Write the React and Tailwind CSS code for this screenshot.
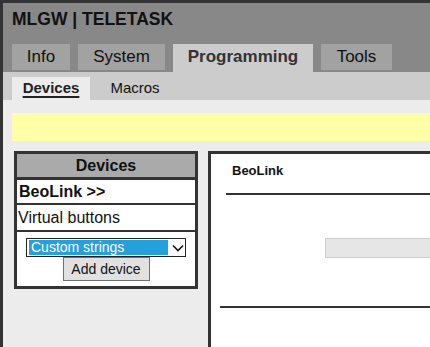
export default function App() {
  const tabs = [
    { label: 'Info', w: 'w-[58px]' },
    { label: 'System', w: 'w-[87px]' },
    { label: 'Programming', w: 'w-[140px]', active: true },
    { label: 'Tools', w: 'w-[71px]' },
  ]

  return (
    <div className="h-[347px] w-[430px] overflow-hidden bg-[#333] pl-[3px] pt-[3px] font-['Liberation_Sans',Arial,sans-serif]">
      <div className="h-full bg-[#ececec]">
        {/* header */}
        <header className="bg-[#888] pt-[5px]">
          <h1 className="pl-[9px] text-[17.5px] font-bold leading-[22px] text-[#111]">MLGW | TELETASK</h1>
          <nav className="mt-[14px] flex items-start gap-[8px] pl-[9px] h-[28px]">
            {tabs.map((t) =>
              t.active ? (
                <div
                  key={t.label}
                  className={`${t.w} h-[28px] bg-[#ccc] text-center text-[17px] font-bold leading-[26px] text-[#333]`}
                >
                  {t.label}
                </div>
              ) : (
                <div
                  key={t.label}
                  className={`${t.w} h-[26px] bg-[#a2a2a2] text-center text-[17px] leading-[26px] text-[#111]`}
                >
                  {t.label}
                </div>
              )
            )}
          </nav>
        </header>

        {/* sub navigation */}
        <div className="flex h-[28px] items-end bg-[#ccc] pl-[9px]">
          <div className="h-[23px] w-[78px] bg-[#ececec] text-center text-[15px] font-bold leading-[22px] text-[#222] underline underline-offset-[3px] decoration-2">
            Devices
          </div>
          <div className="h-[23px] w-[90px] text-center text-[15px] leading-[22px] text-[#111]">Macros</div>
        </div>

        {/* message bar */}
        <div className="ml-[9px] mt-[13px] h-[28px] bg-[#ffffa8]" />

        {/* main */}
        <div className="mt-[10px] flex items-start gap-[10px] pl-[11px]">
          <section className="w-[184px] shrink-0 border-[3px] border-[#333] bg-white">
            <div className="h-[23px] bg-[#aaa] text-center text-[16px] font-bold leading-[23px] text-[#111]">Devices</div>
            <div className="h-[26px] border-t-[3px] border-[#333] pl-[2px] text-[16px] font-bold leading-[23px] text-[#111]">
              BeoLink &gt;&gt;
            </div>
            <div className="h-[27px] border-t-[2px] border-[#333] pl-[1px] text-[16px] leading-[25px] text-[#111]">
              Virtual buttons
            </div>
            <div className="flex h-[56px] flex-col items-center border-t-[2px] border-[#333] pt-[6px]">
              <div className="flex h-[19px] w-[160px] items-center border border-[#222] bg-white pl-[2px]">
                <span className="h-[15px] w-[139px] bg-[#26a0da] pl-[2px] text-[14px] leading-[15px] text-white">
                  Custom strings
                </span>
                <svg className="ml-[4px]" width="12" height="8" viewBox="0 0 12 8">
                  <path d="M1 1.5 L6 6.5 L11 1.5" fill="none" stroke="#111" strokeWidth="1.6" />
                </svg>
              </div>
              <button className="h-[24px] w-[87px] border border-[#707070] bg-[#e1e1e1] text-[14px] leading-[22px] text-[#111]">
                Add device
              </button>
            </div>
          </section>

          <section className="h-[220px] w-[400px] shrink-0 border-[3px] border-[#333] bg-white">
            <div className="pl-[21px] pt-[9px] text-[13px] font-bold leading-[16px] text-[#111]">BeoLink</div>
            <div className="ml-[15px] mt-[14px] h-[2px] bg-[#333]" />
            <div className="ml-[114px] mt-[43px] h-[20px] border border-[#ccc] bg-[#e6e6e6]" />
            <div className="ml-[9px] mt-[48px] h-[2px] bg-[#333]" />
          </section>
        </div>
      </div>
    </div>
  )
}
